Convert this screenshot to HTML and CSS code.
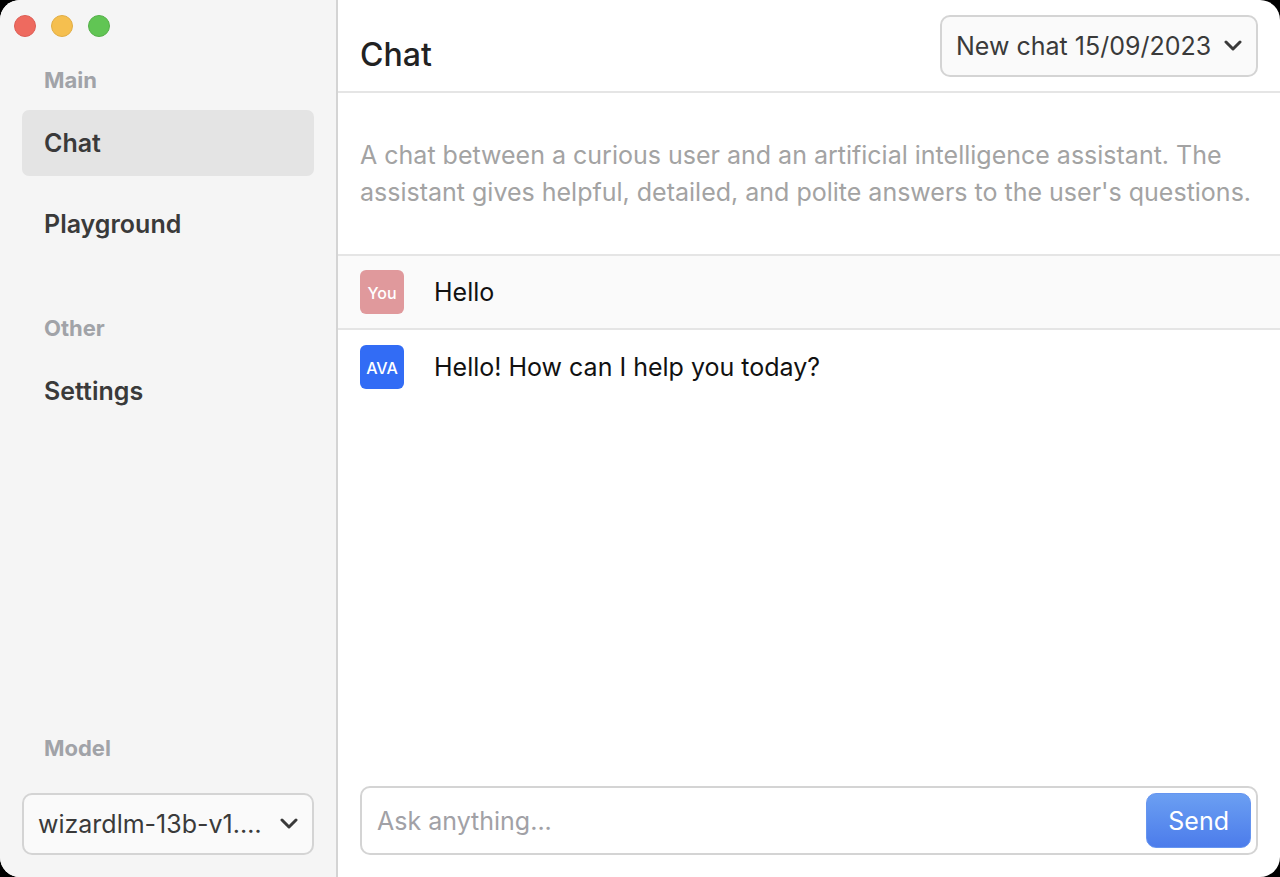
FILE: index.html
```html
<!DOCTYPE html>
<html lang="en">
<head>
<meta charset="utf-8">
<title>Chat</title>
<link rel="stylesheet" href="styles.css">
</head>
<body>
<div class="window">
  <aside class="sidebar">
    <div class="lights">
      <button class="light light-close" aria-label="Close"></button>
      <button class="light light-minimize" aria-label="Minimize"></button>
      <button class="light light-zoom" aria-label="Zoom"></button>
    </div>
    <nav class="nav">
      <section class="group">
        <h2 class="group-label">Main</h2>
        <a class="nav-item active" href="#chat">Chat</a>
        <a class="nav-item" href="#playground">Playground</a>
      </section>
      <section class="group">
        <h2 class="group-label">Other</h2>
        <a class="nav-item" href="#settings">Settings</a>
      </section>
    </nav>
    <div class="model">
      <label class="group-label" for="model">Model</label>
      <div class="picker">
        <select class="select" id="model"><option>wizardlm-13b-v1.…</option></select>
        <svg class="chevron" viewBox="0 0 18 12" aria-hidden="true"><path d="M2 2l7 7 7-7"/></svg>
      </div>
    </div>
  </aside>
  <main class="main">
    <header class="header">
      <h1 class="title">Chat</h1>
      <div class="picker">
        <select class="select select-chat" aria-label="Conversation"><option>New chat 15/09/2023</option></select>
        <svg class="chevron" viewBox="0 0 18 12" aria-hidden="true"><path d="M2 2l7 7 7-7"/></svg>
      </div>
    </header>
    <div class="thread">
      <p class="prompt">A chat between a curious user and an artificial intelligence assistant. The assistant gives helpful, detailed, and polite answers to the user's questions.</p>
      <article class="message from-user">
        <span class="avatar avatar-user">You</span>
        <p class="text">Hello</p>
      </article>
      <article class="message">
        <span class="avatar avatar-ava">AVA</span>
        <p class="text">Hello! How can I help you today?</p>
      </article>
    </div>
    <form class="composer">
      <input class="input" type="text" placeholder="Ask anything..." aria-label="Message">
      <button class="send" type="button">Send</button>
    </form>
  </main>
</div>
</body>
</html>
```
FILE: styles.css
```css
* {
  box-sizing: border-box;
}

body {
  margin: 0;
  background: #000;
  color: #111;
  font-family: Inter, "Liberation Sans", sans-serif;
  font-size: 25px;
}

h1, h2, p {
  margin: 0;
}

button, input, select {
  font: inherit;
}

.window {
  display: flex;
  min-height: 100vh;
  border-radius: 20px;
  overflow: hidden;
  background: #fff;
}

.sidebar {
  display: flex;
  flex-direction: column;
  flex: 0 0 338px;
  padding: 15px 22px 22px;
  background: #f5f5f5;
  border-right: 2px solid #d4d4d4;
}

.lights {
  display: flex;
  gap: 15px;
  margin: 0 -8px 28px;
}

.light {
  width: 22px;
  height: 22px;
  padding: 0;
  border: 1px solid #dc5e56;
  border-radius: 50%;
  background: #ee6a5f;
}

.light-minimize {
  background: #f5bf4f;
  border-color: #e0ad45;
}

.light-zoom {
  background: #61c554;
  border-color: #56b04a;
}

.nav {
  display: flex;
  flex-direction: column;
  gap: 56px;
}

.group {
  display: flex;
  flex-direction: column;
  gap: 15px;
}

.group-label {
  display: block;
  padding: 0 22px;
  color: #a1a3a8;
  font-size: 22px;
  font-weight: 700;
  line-height: 30px;
}

.nav-item {
  padding: 0 22px;
  border-radius: 7px;
  color: #3a3a3a;
  font-weight: 600;
  line-height: 66px;
  text-decoration: none;
}

.active {
  background: #e4e4e4;
}

.model {
  display: flex;
  flex-direction: column;
  gap: 30px;
  margin-top: auto;
}

.picker {
  position: relative;
}

.select {
  display: block;
  width: 100%;
  height: 62px;
  padding: 0 44px 0 14px;
  appearance: none;
  border: 2px solid #d4d4d4;
  border-radius: 10px;
  background: #fafafa;
  color: #3a3a3a;
}

.chevron {
  position: absolute;
  top: 25px;
  right: 16px;
  width: 18px;
  height: 12px;
  fill: none;
  stroke: #3a3a3a;
  stroke-width: 3;
  stroke-linecap: round;
  stroke-linejoin: round;
  pointer-events: none;
}

.main {
  display: flex;
  flex-direction: column;
  flex: 1;
  min-width: 0;
}

.header {
  display: flex;
  align-items: center;
  justify-content: space-between;
  padding: 15px 22px 14px;
  border-bottom: 2px solid #e5e5e5;
}

.title {
  padding-top: 18px;
  color: #222;
  font-size: 32px;
  font-weight: 500;
  line-height: 44px;
}

.thread {
  flex: 1;
}

.prompt {
  padding: 44px 22px 43px;
  color: #a3a3a3;
  line-height: 37px;
}

.message {
  display: flex;
  align-items: center;
  gap: 30px;
  padding: 15px 22px;
}

.from-user {
  border-top: 2px solid #e5e5e5;
  border-bottom: 2px solid #e5e5e5;
  background: #fafafa;
  padding-block: 14px;
}

.avatar {
  flex: 0 0 44px;
  border-radius: 6px;
  color: #fff;
  font-size: 16px;
  font-weight: 500;
  line-height: 46px;
  height: 44px;
  text-align: center;
}

.avatar-user {
  background: #e0999c;
}

.avatar-ava {
  background: #326cf5;
}

.text {
  line-height: 44px;
}

.composer {
  display: flex;
  align-items: center;
  margin: 0 22px 22px;
  padding: 5px;
  border: 2px solid #d4d4d4;
  border-radius: 10px;
}

.input {
  flex: 1;
  min-width: 0;
  padding: 0 10px;
  border: 0;
  outline: 0;
  background: transparent;
}

.input::placeholder {
  color: #a1a1a6;
}

.send {
  height: 55px;
  padding: 0 21px;
  border: 1px solid #6695f0;
  border-radius: 10px;
  background: linear-gradient(#6b9ff2, #4c7ceb);
  color: #fff;
}
```
